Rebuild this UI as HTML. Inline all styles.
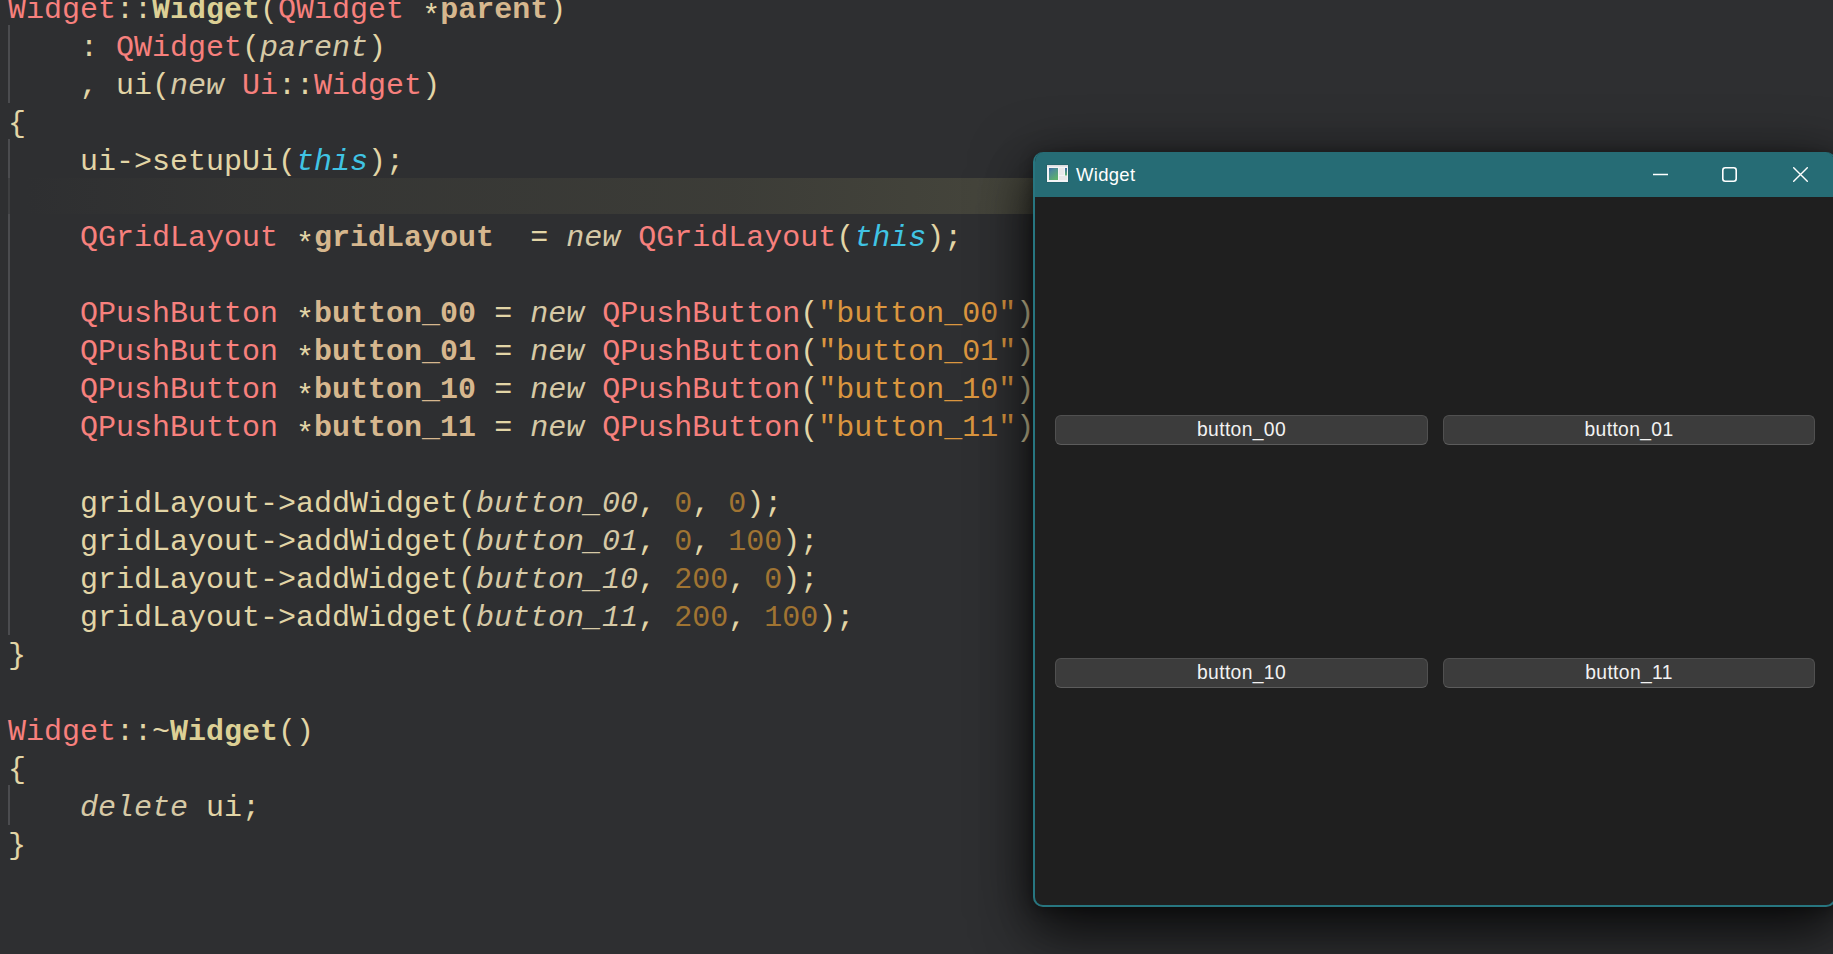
<!DOCTYPE html>
<html><head><meta charset="utf-8">
<style>
html,body{margin:0;padding:0;}
body{width:1833px;height:954px;overflow:hidden;background:#2e2f31;position:relative;}
.code{position:absolute;left:8px;top:-9px;font-family:"Liberation Mono",monospace;font-size:30px;line-height:38px;color:#e2d5a6;}
.code div{height:38px;white-space:pre;}
.r{color:#f7807d;}
.y{color:#dcd095;font-weight:bold;}
.t{color:#d6b78e;font-weight:bold;}
.i{color:#d6c9a6;font-style:italic;}
.c{color:#40c4e4;font-style:italic;}
.s{color:#db963f;}
.ast{position:relative;top:7px;}
.n{color:#a07432;}
.guide{position:absolute;left:8px;width:2px;background:#4b4c4f;}
.hl{position:absolute;left:26px;top:178px;width:1010px;height:36px;background:linear-gradient(90deg,rgba(60,60,55,0) 0%,rgba(62,62,56,0.35) 20%,rgba(66,66,58,0.7) 70%,rgba(70,70,60,1) 100%);}
.ic{position:absolute;}
.shadow{position:absolute;left:1033px;top:152px;width:803px;height:755px;border-radius:10px;box-shadow:0 14px 60px rgba(0,0,0,0.7),0 30px 50px rgba(0,0,0,0.35),0 2px 14px rgba(0,0,0,0.3);}
.win{position:absolute;left:1033px;top:152px;width:799px;height:753px;border:2px solid #277680;border-top:none;border-radius:10px;background:#1f1f1f;overflow:hidden;}
.title{position:absolute;left:-2px;top:0;width:803px;height:45px;background:#266c75;}
.ttext{position:absolute;left:43px;top:12px;font-family:"Liberation Sans",sans-serif;font-size:18.5px;letter-spacing:0.3px;color:#fff;}
.btn{position:absolute;height:28px;border:1px solid #505050;border-bottom-color:#5c5c5c;border-radius:6px;background:#3c3c3c;font-family:"Liberation Sans",sans-serif;font-size:19.3px;letter-spacing:0.35px;color:#f2f2f2;text-align:center;line-height:28px;box-sizing:content-box;}
</style></head><body>
<div class="guide" style="top:25px;height:78px"></div>
<div class="guide" style="top:139px;height:39px"></div>
<div class="guide" style="top:178px;height:36px;background:#3e3f41"></div>
<div class="guide" style="top:214px;height:421px"></div>
<div class="guide" style="top:785px;height:40px"></div>
<div class="hl"></div>
<div class="code">
<div><span class="r">Widget</span>::<span class="y">Widget</span>(<span class="r">QWidget</span> <span class="ast">*</span><span class="t">parent</span>)</div>
<div>    : <span class="r">QWidget</span>(<span class="i">parent</span>)</div>
<div>    , ui(<span class="i">new</span> <span class="r">Ui</span>::<span class="r">Widget</span>)</div>
<div>{</div>
<div>    ui-&gt;setupUi(<span class="c">this</span>);</div>
<div></div>
<div>    <span class="r">QGridLayout</span> <span class="ast">*</span><span class="t">gridLayout</span>  = <span class="i">new</span> <span class="r">QGridLayout</span>(<span class="c">this</span>);</div>
<div></div>
<div>    <span class="r">QPushButton</span> <span class="ast">*</span><span class="t">button_00</span> = <span class="i">new</span> <span class="r">QPushButton</span>(<span class="s">"button_00"</span>);</div>
<div>    <span class="r">QPushButton</span> <span class="ast">*</span><span class="t">button_01</span> = <span class="i">new</span> <span class="r">QPushButton</span>(<span class="s">"button_01"</span>);</div>
<div>    <span class="r">QPushButton</span> <span class="ast">*</span><span class="t">button_10</span> = <span class="i">new</span> <span class="r">QPushButton</span>(<span class="s">"button_10"</span>);</div>
<div>    <span class="r">QPushButton</span> <span class="ast">*</span><span class="t">button_11</span> = <span class="i">new</span> <span class="r">QPushButton</span>(<span class="s">"button_11"</span>);</div>
<div></div>
<div>    gridLayout-&gt;addWidget(<span class="i">button_00</span>, <span class="n">0</span>, <span class="n">0</span>);</div>
<div>    gridLayout-&gt;addWidget(<span class="i">button_01</span>, <span class="n">0</span>, <span class="n">100</span>);</div>
<div>    gridLayout-&gt;addWidget(<span class="i">button_10</span>, <span class="n">200</span>, <span class="n">0</span>);</div>
<div>    gridLayout-&gt;addWidget(<span class="i">button_11</span>, <span class="n">200</span>, <span class="n">100</span>);</div>
<div>}</div>
<div></div>
<div><span class="r">Widget</span>::~<span class="y">Widget</span>()</div>
<div>{</div>
<div>    <span class="i">delete</span> ui;</div>
<div>}</div>
</div>
<div class="shadow"></div>
<div class="win">
  <div class="title">
    <div class="ttext">Widget</div>
  </div>
  <svg style="position:absolute;left:11px;top:12px" width="23" height="19" viewBox="0 0 23 19">
    <defs>
      <linearGradient id="g1" x1="0" y1="0" x2="0.6" y2="1"><stop offset="0" stop-color="#4066a2"/><stop offset="0.3" stop-color="#4d8a9a"/><stop offset="1" stop-color="#5caf6c"/></linearGradient>
      <linearGradient id="g2" x1="0" y1="0" x2="0" y2="1"><stop offset="0" stop-color="#3d67a6"/><stop offset="1" stop-color="#62b86a"/></linearGradient>
    </defs>
    <rect x="0.5" y="0.5" width="22" height="18" fill="#1d4e55" opacity="0.45"/>
    <rect x="1" y="1" width="21" height="17" fill="#f4f4f6"/>
    <rect x="1" y="1.2" width="21" height="1.3" fill="#d6d6da"/>
    <rect x="3" y="4" width="9" height="12" fill="url(#g1)"/>
    <rect x="13" y="4" width="5" height="7" fill="#e9e9e9"/>
    <rect x="13" y="12" width="8" height="4" fill="#e8e8e8"/>
    <rect x="19" y="4" width="2" height="7.5" fill="url(#g2)"/>
  </svg>
  <svg style="position:absolute;left:618px;top:13px" width="20" height="20" viewBox="0 0 20 20">
    <line x1="0" y1="9.5" x2="15" y2="9.5" stroke="#fff" stroke-width="1.5"/>
  </svg>
  <svg style="position:absolute;left:687px;top:15px" width="20" height="20" viewBox="0 0 20 20">
    <rect x="0.8" y="0.8" width="13.4" height="13.4" rx="2.5" fill="none" stroke="#fff" stroke-width="1.6"/>
  </svg>
  <svg style="position:absolute;left:758px;top:15px" width="20" height="20" viewBox="0 0 20 20">
    <path d="M0.7 0.7 L14.3 14.3 M14.3 0.7 L0.7 14.3" stroke="#fff" stroke-width="1.4" stroke-linecap="round"/>
  </svg>
  <div class="btn" style="left:20px;top:263px;width:371px;">button_00</div>
  <div class="btn" style="left:408px;top:263px;width:370px;">button_01</div>
  <div class="btn" style="left:20px;top:506px;width:371px;">button_10</div>
  <div class="btn" style="left:408px;top:506px;width:370px;">button_11</div>
</div>
</body></html>
